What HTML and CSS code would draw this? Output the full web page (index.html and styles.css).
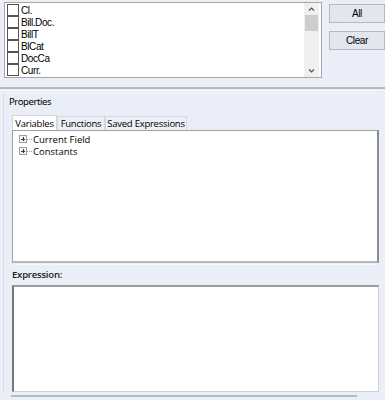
FILE: index.html
```html
<!DOCTYPE html>
<html lang="en">
<head>
  <meta charset="UTF-8" />
  <meta name="viewport" content="width=device-width, initial-scale=1.0" />
  <title>Expression Builder</title>
  <link rel="stylesheet" href="styles.css">
</head>
<body>
  <div class="top">
    <div class="fields">
      <div class="field-list">
        <label class="field"><span class="box"></span>Cl.</label>
        <label class="field"><span class="box"></span>Bill.Doc.</label>
        <label class="field"><span class="box"></span>BillT</label>
        <label class="field"><span class="box"></span>BlCat</label>
        <label class="field"><span class="box"></span>DocCa</label>
        <label class="field"><span class="box"></span>Curr.</label>
      </div>
      <div class="scrollbar">
        <svg class="arrow" width="15" height="12" viewBox="0 0 15 12"><path d="M5 7.5 L7.5 5 L10 7.5" fill="none" stroke="#555" stroke-width="1.2"/></svg>
        <div class="thumb"></div>
        <div class="track"></div>
        <svg class="arrow" width="15" height="12" viewBox="0 0 15 12"><path d="M5 4.5 L7.5 7 L10 4.5" fill="none" stroke="#555" stroke-width="1.2"/></svg>
      </div>
    </div>
    <div class="actions">
      <button class="btn">All</button>
      <button class="btn">Clear</button>
    </div>
  </div>

  <div class="separator"></div>

  <div class="group">
    <div class="group-title">Properties</div>
    <div class="tabs">
      <div class="tab active">Variables</div>
      <div class="tab tab-fn">Functions</div>
      <div class="tab tab-saved">Saved Expressions</div>
    </div>
    <div class="tree">
      <div class="node"><span class="plus"></span><span class="dots"></span>Current Field</div>
      <div class="node"><span class="plus"></span><span class="dots"></span>Constants</div>
    </div>
    <div class="expr-label">Expression:</div>
    <div class="expr"></div>
  </div>
  <div class="bottom-line"></div>
</body>
</html>
```

FILE: styles.css
```css
body {
  margin: 0;
  width: 385px;
  height: 400px;
  overflow: hidden;
  background: #eaeef8;
  font-family: "Liberation Sans", Arial, sans-serif;
  font-size: 11px;
  color: #000;
}
.top {
  display: flex;
  padding: 2px 0 0 4px;
}
.fields {
  display: flex;
  width: 321px;
  height: 74px;
  background: white;
  border: 1px solid #a6a6a6;
}
.field-list {
  flex: 1;
  padding-top: 1px;
}
.field {
  display: flex;
  align-items: center;
  height: 12px;
  font-size: 10px;
  letter-spacing: -0.4px;
}
.box {
  width: 10px;
  height: 10px;
  border: 1px solid #555;
  background: white;
  margin: 0 2px 0 2px;
  flex-shrink: 0;
}
.scrollbar {
  width: 15px;
  display: flex;
  flex-direction: column;
  background: #f0f0f0;
  margin-right: 2px;
}
.thumb {
  height: 16px;
  background: #cdcdcd;
  margin: 0 1px;
}
.track {
  flex: 1;
}
.arrow {
  display: block;
}
.actions {
  display: flex;
  flex-direction: column;
  gap: 8px;
  margin-left: 7px;
  padding-top: 2px;
}
.btn {
  width: 56px;
  height: 19px;
  background: #e3e6ec;
  border: 1px solid #b4b8c0;
  font-family: "Liberation Sans", Arial, sans-serif;
  font-size: 10px;
  letter-spacing: -0.4px;
  padding: 0;
  color: #000;
}
.separator {
  margin-top: 9px;
  height: 1px;
  border-top: 2px solid #b6b9be;
  border-bottom: 1px solid #f7f8fc;
}
.group {
  margin: 2px 6px 0 3px;
  border-left: 1px solid #d7dbe3;
  border-top: 1px solid #f4f5fa;
  padding: 0 0 0 8px;
}
.group-title {
  font-family: "Noto Sans", sans-serif;
  font-size: 9.5px;
  letter-spacing: -0.4px;
  margin: 0 0 0 -3px;
  height: 16px;
  line-height: 16px;
}
.tabs {
  display: flex;
  height: 15px;
  margin-top: 5px;
  font-family: "Open Sans", sans-serif;
  font-size: 9.5px;
  letter-spacing: -0.25px;
  white-space: nowrap;
}
.tab {
  width: 45px;
  text-align: center;
  border: 1px solid #d4d7de;
  border-bottom: none;
  background: #eceff5;
  line-height: 14px;
  margin-top: 1px;
  box-sizing: border-box;
}
.tab.active {
  background: white;
  margin-top: 0;
  line-height: 15px;
}
.tab-fn {
  width: 48px;
}
.tab-saved {
  width: 82px;
}
.tree {
  height: 128px;
  background: white;
  border: 1px solid #a0a0a0;
  border-right: 2px solid #8c8c8c;
  border-bottom: 2px solid #b8b8b8;
  padding-top: 2px;
  font-family: "Open Sans", sans-serif;
  font-size: 9.5px;
}
.node {
  display: flex;
  align-items: center;
  height: 12px;
  padding-left: 6px;
}
.plus {
  position: relative;
  width: 6px;
  height: 6px;
  border: 1px solid #a0a0a0;
  background: #f4f4f4;
}
.plus::before {
  content: "";
  position: absolute;
  left: 1px;
  top: 2.5px;
  width: 4px;
  height: 1px;
  background: #333;
}
.plus::after {
  content: "";
  position: absolute;
  left: 2.5px;
  top: 1px;
  width: 1px;
  height: 4px;
  background: #333;
}
.dots {
  width: 5px;
  border-top: 1px dotted #999;
  margin-right: 1px;
}
.expr-label {
  font-family: "Open Sans", sans-serif;
  font-size: 9.5px;
  font-weight: 600;
  letter-spacing: -0.2px;
  color: #222;
  height: 20px;
  line-height: 20px;
  margin-top: 1px;
  border-top: 1px solid #f6f7fb;
}
.expr {
  height: 104px;
  background: white;
  border: 1px solid #d0d0d0;
  border-left: 2px solid #777;
  border-top: 2px solid #9a9a9a;
}
.bottom-line {
  margin: 3px 0 0 11px;
  width: 346px;
  height: 2px;
  background: #b7bac2;
}
```
